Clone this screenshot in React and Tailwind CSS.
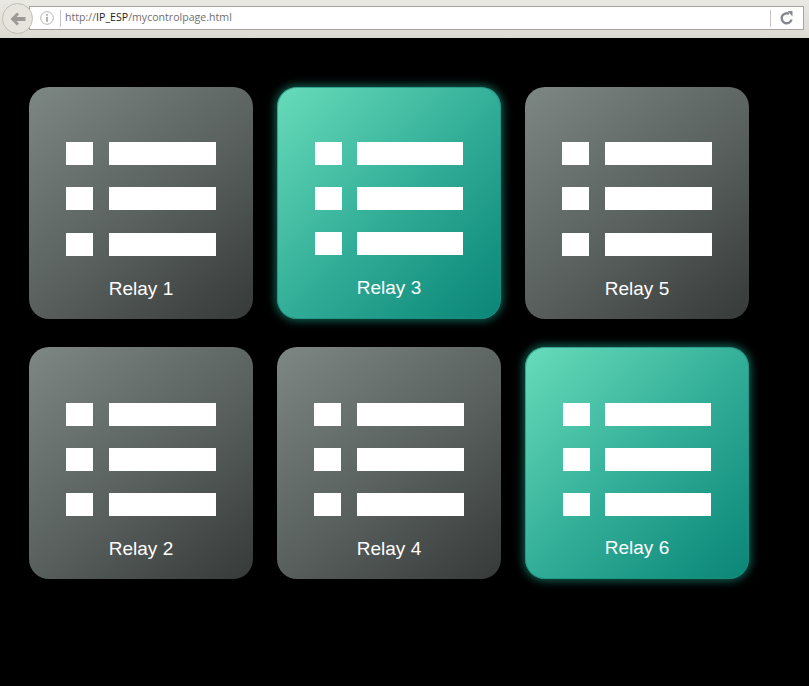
const relays = [
  { name: "Relay 1", on: false, top: "pt-[55px]", lastRow: "mt-[23px]", label: "mt-[22px]" },
  { name: "Relay 3", on: true, top: "pt-[55px]", lastRow: "mt-[22px]", label: "mt-[22px]" },
  { name: "Relay 5", on: false, top: "pt-[55px]", lastRow: "mt-[23px]", label: "mt-[22px]" },
  { name: "Relay 2", on: false, top: "pt-[56px]", lastRow: "mt-[22px]", label: "mt-[22px]" },
  { name: "Relay 4", on: false, top: "pt-[56px]", lastRow: "mt-[22px]", label: "mt-[22px]" },
  { name: "Relay 6", on: true, top: "pt-[56px]", lastRow: "mt-[22px]", label: "mt-[21px]" },
];

function IconRow({ on, className = "" }) {
  return (
    <div className={`flex h-[23px] ${on ? "gap-[15px]" : "gap-[16px]"} ${className}`}>
      <div className="w-[27px] bg-white" />
      <div className={`bg-white ${on ? "w-[106px]" : "w-[107px]"}`} />
    </div>
  );
}

function RelayCard({ name, on, top, lastRow, label }) {
  return (
    <div
      className={`flex h-[232px] w-[224px] flex-col items-center rounded-[20px] ${top} ${
        on
          ? "bg-[linear-gradient(135deg,#68dcba_0%,#2eaa95_55%,#0a8577_100%)] shadow-[inset_0_0_0_1px_rgba(31,143,127,0.7),0_0_8px_2px_rgba(30,170,145,0.55)]"
          : "bg-[linear-gradient(140deg,#7d8783_0%,#585f5d_55%,#363a38_100%)]"
      }`}
    >
      <div className="flex flex-col">
        <IconRow on={on} />
        <IconRow on={on} className="mt-[22px]" />
        <IconRow on={on} className={lastRow} />
      </div>
      <p className={`text-[19px] leading-[22px] text-white ${label}`}>{name}</p>
    </div>
  );
}

export default function App() {
  return (
    <div className="h-[686px] w-[809px] overflow-hidden bg-black font-['Liberation_Sans',Arial,sans-serif]">
      <div className="relative flex h-[38px] items-start bg-[linear-gradient(180deg,#eae8e2,#dcdad2)] pl-[29px] pr-[5px] pt-[6px]">
        <div className="absolute left-[2px] top-[3px] z-10 flex h-[31px] w-[31px] items-center justify-center rounded-full border border-[#c2bfb7] bg-[#e6e4dd]">
          <svg width="16" height="14" viewBox="0 0 16 14">
            <path d="M0.5 7 L7 0.5 L9 2.5 L6.5 5 L15.5 5 L15.5 9 L6.5 9 L9 11.5 L7 13.5 Z" fill="#9b9a96" />
          </svg>
        </div>
        <div className="flex h-[24px] flex-1 items-center border border-[#a5a39b] bg-white pl-[10px]">
          <svg width="14" height="14" viewBox="0 0 14 14" className="shrink-0">
            <circle cx="7" cy="7" r="6.3" fill="none" stroke="#b4b4b2" strokeWidth="1" />
            <rect x="6.2" y="3" width="1.6" height="1.7" fill="#a0a09e" />
            <rect x="6.2" y="5.8" width="1.6" height="5" fill="#a0a09e" />
          </svg>
          <div className="ml-[6px] h-[17px] w-px bg-[#c4c4c4]" />
          <span className="ml-[4px] font-['Open_Sans',sans-serif] text-[10.6px] text-[#707070]">
            http://<span className="text-[#222]">IP_ESP</span>/mycontrolpage.html
          </span>
          <div className="ml-auto flex h-full items-center">
            <div className="h-[17px] w-px bg-[#c4c4c4]" />
            <svg width="32" height="16" viewBox="0 0 32 16">
              <path d="M20.5 9.5 A5 5 0 1 1 18 3.9" fill="none" stroke="#85888f" strokeWidth="2.4" />
              <path d="M16.5 1 L21.5 1 L21.5 6.5 Z" fill="#85888f" />
            </svg>
          </div>
        </div>
      </div>
      <div className="grid w-fit grid-cols-3 gap-x-[24px] gap-y-[28px] pl-[29px] pt-[49px]">
        {relays.map((r) => (
          <RelayCard key={r.name} {...r} />
        ))}
      </div>
    </div>
  );
}
